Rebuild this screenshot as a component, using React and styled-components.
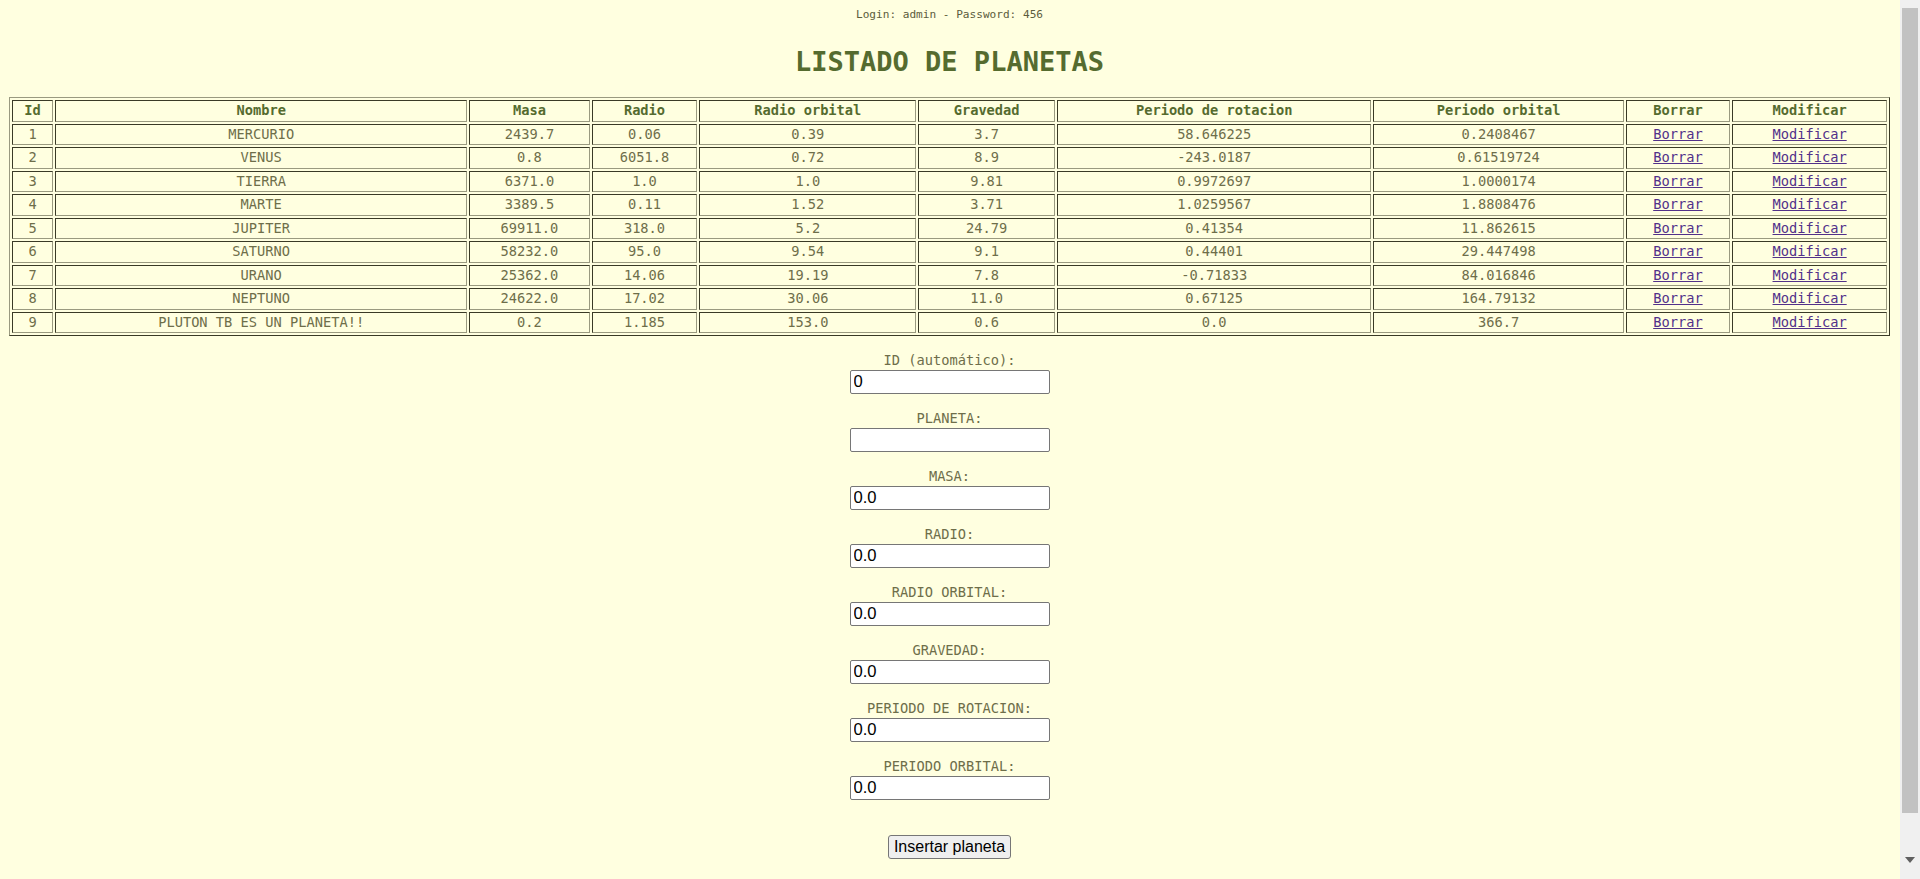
import React from 'react';
import styled, { createGlobalStyle } from 'styled-components';

const GlobalStyle = createGlobalStyle`
  html, body {
    margin: 0;
    padding: 0;
    background: #ffffe0;
    overflow: hidden;
  }
  body {
    font-family: 'DejaVu Sans Mono', 'Liberation Mono', monospace;
    color: #6e6e4a;
  }
`;

const Page = styled.div`
  width: 1900px;
  box-sizing: border-box;
  padding: 9px 10px 0 9px;
`;

const Credentials = styled.p`
  margin: 0;
  text-align: center;
  font-size: 11.1px;
  line-height: 12px;
  color: #5c5c3c;
`;

const Title = styled.h1`
  margin: 24.5px 0 19.5px;
  text-align: center;
  font-size: 27px;
  line-height: 32px;
  font-weight: 700;
  color: #556b2f;
`;

const PlanetTable = styled.table`
  width: 100%;
  table-layout: fixed;
  border-collapse: separate;
  border-spacing: 2px;
  border: 1px solid;
  border-color: #9a9a80 #3a3a26 #3a3a26 #9a9a80;
`;

const cellBase = `
  box-sizing: border-box;
  padding: 1px;
  border: 1px solid;
  border-color: #3a3a26 #9a9a80 #9a9a80 #3a3a26;
  text-align: center;
  font-size: 13.7px;
  line-height: 17.5px;
  white-space: nowrap;
  overflow: hidden;
`;

const HeadCell = styled.th`
  ${cellBase}
  width: ${(p) => p.$w}px;
  font-weight: 700;
  color: #556b2f;
`;

const Cell = styled.td`
  ${cellBase}
  font-weight: 400;
  color: #6e6e4a;
`;

const ActionLink = styled.a`
  color: #52318a;
  text-decoration: underline;
`;

const Form = styled.form`
  display: flex;
  flex-direction: column;
  align-items: center;
  margin-top: 15px;
`;

const Field = styled.div`
  display: flex;
  flex-direction: column;
  align-items: center;
  margin-bottom: 15px;
`;

const FieldLabel = styled.label`
  font-size: 13.7px;
  line-height: 19px;
  color: #6e6e4a;
`;

const TextInput = styled.input`
  box-sizing: border-box;
  width: 200px;
  height: 24px;
  margin: 0;
  padding: 1px 3px;
  border: 1px solid #767676;
  border-radius: 2px;
  background: #fff;
  font-family: 'Liberation Sans', Arial, sans-serif;
  font-size: 16.6px;
  color: #000;
`;

const SubmitButton = styled.button`
  box-sizing: border-box;
  margin-top: 20px;
  width: 123px;
  height: 24px;
  padding: 0 2px;
  border: 1px solid #767676;
  border-radius: 3px;
  background: #efefef;
  font-family: 'Liberation Sans', Arial, sans-serif;
  font-size: 16px;
  white-space: nowrap;
  color: #000;
`;

const Scrollbar = styled.div`
  position: fixed;
  top: 0;
  right: 0;
  width: 20px;
  height: 100%;
  background: #f0f0f0;
`;

const ScrollThumb = styled.div`
  position: absolute;
  left: 2px;
  right: 2px;
  top: 8px;
  height: 805px;
  background: #c2c2c2;
`;

const ScrollArrow = styled.svg`
  position: absolute;
  left: 5px;
  bottom: 16px;
`;

const columns = [
  { key: 'id', label: 'Id', w: 41 },
  { key: 'nombre', label: 'Nombre', w: 410 },
  { key: 'masa', label: 'Masa', w: 120 },
  { key: 'radio', label: 'Radio', w: 105 },
  { key: 'radioOrbital', label: 'Radio orbital', w: 216 },
  { key: 'gravedad', label: 'Gravedad', w: 136 },
  { key: 'rotacion', label: 'Periodo de rotacion', w: 313 },
  { key: 'orbital', label: 'Periodo orbital', w: 249 },
  { key: 'borrar', label: 'Borrar', w: 104 },
  { key: 'modificar', label: 'Modificar', w: 154 },
];

const planets = [
  [1, 'MERCURIO', '2439.7', '0.06', '0.39', '3.7', '58.646225', '0.2408467'],
  [2, 'VENUS', '0.8', '6051.8', '0.72', '8.9', '-243.0187', '0.61519724'],
  [3, 'TIERRA', '6371.0', '1.0', '1.0', '9.81', '0.9972697', '1.0000174'],
  [4, 'MARTE', '3389.5', '0.11', '1.52', '3.71', '1.0259567', '1.8808476'],
  [5, 'JUPITER', '69911.0', '318.0', '5.2', '24.79', '0.41354', '11.862615'],
  [6, 'SATURNO', '58232.0', '95.0', '9.54', '9.1', '0.44401', '29.447498'],
  [7, 'URANO', '25362.0', '14.06', '19.19', '7.8', '-0.71833', '84.016846'],
  [8, 'NEPTUNO', '24622.0', '17.02', '30.06', '11.0', '0.67125', '164.79132'],
  [9, 'PLUTON TB ES UN PLANETA!!', '0.2', '1.185', '153.0', '0.6', '0.0', '366.7'],
];

const fields = [
  { label: 'ID (automático):', value: '0' },
  { label: 'PLANETA:', value: '' },
  { label: 'MASA:', value: '0.0' },
  { label: 'RADIO:', value: '0.0' },
  { label: 'RADIO ORBITAL:', value: '0.0' },
  { label: 'GRAVEDAD:', value: '0.0' },
  { label: 'PERIODO DE ROTACION:', value: '0.0' },
  { label: 'PERIODO ORBITAL:', value: '0.0' },
];

export default function App() {
  return (
    <>
      <GlobalStyle />
      <Page>
        <Credentials>Login: admin - Password: 456</Credentials>
        <Title>LISTADO DE PLANETAS</Title>

        <PlanetTable>
          <thead>
            <tr>
              {columns.map((c) => (
                <HeadCell key={c.key} $w={c.w}>
                  {c.label}
                </HeadCell>
              ))}
            </tr>
          </thead>
          <tbody>
            {planets.map((row) => (
              <tr key={row[0]}>
                {row.map((v, i) => (
                  <Cell key={i}>{v}</Cell>
                ))}
                <Cell>
                  <ActionLink href="#">Borrar</ActionLink>
                </Cell>
                <Cell>
                  <ActionLink href="#">Modificar</ActionLink>
                </Cell>
              </tr>
            ))}
          </tbody>
        </PlanetTable>

        <Form onSubmit={(e) => e.preventDefault()}>
          {fields.map((f) => (
            <Field key={f.label}>
              <FieldLabel>{f.label}</FieldLabel>
              <TextInput type="text" defaultValue={f.value} />
            </Field>
          ))}
          <SubmitButton type="submit">Insertar planeta</SubmitButton>
        </Form>
      </Page>

      <Scrollbar>
        <ScrollThumb />
        <ScrollArrow width="10" height="6" viewBox="0 0 10 6">
          <path d="M0 0 H10 L5 6 Z" fill="#606060" />
        </ScrollArrow>
      </Scrollbar>
    </>
  );
}
